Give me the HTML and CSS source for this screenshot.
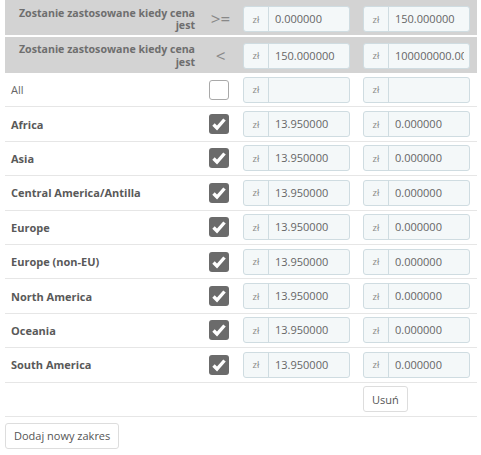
FILE: index.html
```html
<!DOCTYPE html>
<html lang="pl">
<head>
<meta charset="utf-8">
<title>Zakresy</title>
<link rel="stylesheet" href="styles.css">
</head>
<body>
<div class="ranges">
  <div class="row hrow first">
    <div class="hlabel">Zostanie zastosowane kiedy cena jest</div>
    <div class="op">&gt;=</div>
    <div class="c3"><div class="ig"><span class="addon">zł</span><span class="val">0.000000</span></div></div>
    <div class="c4"><div class="ig"><span class="addon">zł</span><span class="val">150.000000</span></div></div>
  </div>
  <div class="row hrow second">
    <div class="hlabel">Zostanie zastosowane kiedy cena jest</div>
    <div class="op">&lt;</div>
    <div class="c3"><div class="ig"><span class="addon">zł</span><span class="val">150.000000</span></div></div>
    <div class="c4"><div class="ig"><span class="addon">zł</span><span class="val">100000000.000000</span></div></div>
  </div>

  <div class="row brow">
    <div class="name all">All</div>
    <div class="cb"><span class="box empty"></span></div>
    <div class="c3"><div class="ig"><span class="addon">zł</span><span class="val"></span></div></div>
    <div class="c4"><div class="ig"><span class="addon">zł</span><span class="val"></span></div></div>
  </div>

  <div class="row brow">
    <div class="name">Africa</div>
    <div class="cb"><svg class="box" viewBox="0 0 20 20"><rect width="20" height="20" rx="3" fill="#6b6b6b"/><path d="M4.5 10.5 L8 14 L15.5 5.5" fill="none" stroke="#fff" stroke-width="3.4"/></svg></div>
    <div class="c3"><div class="ig"><span class="addon">zł</span><span class="val">13.950000</span></div></div>
    <div class="c4"><div class="ig"><span class="addon">zł</span><span class="val">0.000000</span></div></div>
  </div>
  <div class="row brow">
    <div class="name">Asia</div>
    <div class="cb"><svg class="box" viewBox="0 0 20 20"><rect width="20" height="20" rx="3" fill="#6b6b6b"/><path d="M4.5 10.5 L8 14 L15.5 5.5" fill="none" stroke="#fff" stroke-width="3.4"/></svg></div>
    <div class="c3"><div class="ig"><span class="addon">zł</span><span class="val">13.950000</span></div></div>
    <div class="c4"><div class="ig"><span class="addon">zł</span><span class="val">0.000000</span></div></div>
  </div>
  <div class="row brow">
    <div class="name">Central America/Antilla</div>
    <div class="cb"><svg class="box" viewBox="0 0 20 20"><rect width="20" height="20" rx="3" fill="#6b6b6b"/><path d="M4.5 10.5 L8 14 L15.5 5.5" fill="none" stroke="#fff" stroke-width="3.4"/></svg></div>
    <div class="c3"><div class="ig"><span class="addon">zł</span><span class="val">13.950000</span></div></div>
    <div class="c4"><div class="ig"><span class="addon">zł</span><span class="val">0.000000</span></div></div>
  </div>
  <div class="row brow">
    <div class="name">Europe</div>
    <div class="cb"><svg class="box" viewBox="0 0 20 20"><rect width="20" height="20" rx="3" fill="#6b6b6b"/><path d="M4.5 10.5 L8 14 L15.5 5.5" fill="none" stroke="#fff" stroke-width="3.4"/></svg></div>
    <div class="c3"><div class="ig"><span class="addon">zł</span><span class="val">13.950000</span></div></div>
    <div class="c4"><div class="ig"><span class="addon">zł</span><span class="val">0.000000</span></div></div>
  </div>
  <div class="row brow">
    <div class="name">Europe (non-EU)</div>
    <div class="cb"><svg class="box" viewBox="0 0 20 20"><rect width="20" height="20" rx="3" fill="#6b6b6b"/><path d="M4.5 10.5 L8 14 L15.5 5.5" fill="none" stroke="#fff" stroke-width="3.4"/></svg></div>
    <div class="c3"><div class="ig"><span class="addon">zł</span><span class="val">13.950000</span></div></div>
    <div class="c4"><div class="ig"><span class="addon">zł</span><span class="val">0.000000</span></div></div>
  </div>
  <div class="row brow">
    <div class="name">North America</div>
    <div class="cb"><svg class="box" viewBox="0 0 20 20"><rect width="20" height="20" rx="3" fill="#6b6b6b"/><path d="M4.5 10.5 L8 14 L15.5 5.5" fill="none" stroke="#fff" stroke-width="3.4"/></svg></div>
    <div class="c3"><div class="ig"><span class="addon">zł</span><span class="val">13.950000</span></div></div>
    <div class="c4"><div class="ig"><span class="addon">zł</span><span class="val">0.000000</span></div></div>
  </div>
  <div class="row brow">
    <div class="name">Oceania</div>
    <div class="cb"><svg class="box" viewBox="0 0 20 20"><rect width="20" height="20" rx="3" fill="#6b6b6b"/><path d="M4.5 10.5 L8 14 L15.5 5.5" fill="none" stroke="#fff" stroke-width="3.4"/></svg></div>
    <div class="c3"><div class="ig"><span class="addon">zł</span><span class="val">13.950000</span></div></div>
    <div class="c4"><div class="ig"><span class="addon">zł</span><span class="val">0.000000</span></div></div>
  </div>
  <div class="row brow">
    <div class="name">South America</div>
    <div class="cb"><svg class="box" viewBox="0 0 20 20"><rect width="20" height="20" rx="3" fill="#6b6b6b"/><path d="M4.5 10.5 L8 14 L15.5 5.5" fill="none" stroke="#fff" stroke-width="3.4"/></svg></div>
    <div class="c3"><div class="ig"><span class="addon">zł</span><span class="val">13.950000</span></div></div>
    <div class="c4"><div class="ig"><span class="addon">zł</span><span class="val">0.000000</span></div></div>
  </div>

  <div class="row brow">
    <div></div>
    <div></div>
    <div></div>
    <div class="c4"><button class="btn">Usuń</button></div>
  </div>
</div>
<div class="actions"><button class="btn add">Dodaj nowy zakres</button></div>
</body>
</html>
```

FILE: styles.css
```css
body {
  margin: 0;
  font-family: "Open Sans", "DejaVu Sans", sans-serif;
  background: #fff;
  color: #555;
}

.ranges {
  margin-left: 5px;
  width: 472px;
}

.row {
  display: grid;
  grid-template-columns: 195px 38px 125px 114px;
  align-items: center;
  box-sizing: border-box;
}

.hrow {
  background: #d3d3d3;
}

.hrow.first {
  height: 35px;
  padding-top: 3px;
}

.hrow.second {
  height: 36px;
  margin-top: 2px;
  padding-top: 1px;
}

.hlabel {
  text-align: right;
  padding: 0 5px;
  font-weight: 700;
  font-size: 10.6px;
  line-height: 12.5px;
  color: #6e6e6e;
}

.op {
  text-align: center;
  padding-left: 3px;
  font-size: 17px;
  color: #888;
  line-height: 20px;
}

.c3 {
  padding-left: 5px;
}

.ig {
  display: flex;
  width: 107px;
  height: 26px;
  box-sizing: border-box;
  border: 1px solid #cfdce1;
  border-radius: 3px;
  background: #f4f8f9;
}

.addon {
  width: 24px;
  flex: none;
  border-right: 1px solid #cfdce1;
  display: flex;
  align-items: center;
  justify-content: center;
  font-size: 9.5px;
  color: #888;
}

.val {
  flex: 1;
  min-width: 0;
  margin: 0 5px 0 6px;
  overflow: hidden;
  white-space: nowrap;
  font-size: 11px;
  line-height: 24px;
  color: #666;
}

.brow {
  height: 34.4px;
  border-bottom: 1px solid #e6e6e6;
}

.name {
  padding-left: 6px;
  font-size: 11px;
  font-weight: 700;
  color: #595959;
  white-space: nowrap;
}

.name.all {
  font-weight: 400;
  color: #666;
}

.cb {
  display: flex;
  justify-content: center;
}

.box {
  display: block;
  width: 20px;
  height: 20px;
  box-sizing: border-box;
}

.box.empty {
  border: 1px solid #a9a9a9;
  border-radius: 3px;
  background: #fff;
}

.btn {
  font-family: "Open Sans", "DejaVu Sans", sans-serif;
  font-size: 11px;
  color: #555;
  background: #fff;
  border: 1px solid #ddd;
  border-radius: 3px;
  height: 26px;
  padding: 0 8px;
  margin: 0;
  display: block;
}

.actions {
  margin: 6px 0 0 5px;
}
```
